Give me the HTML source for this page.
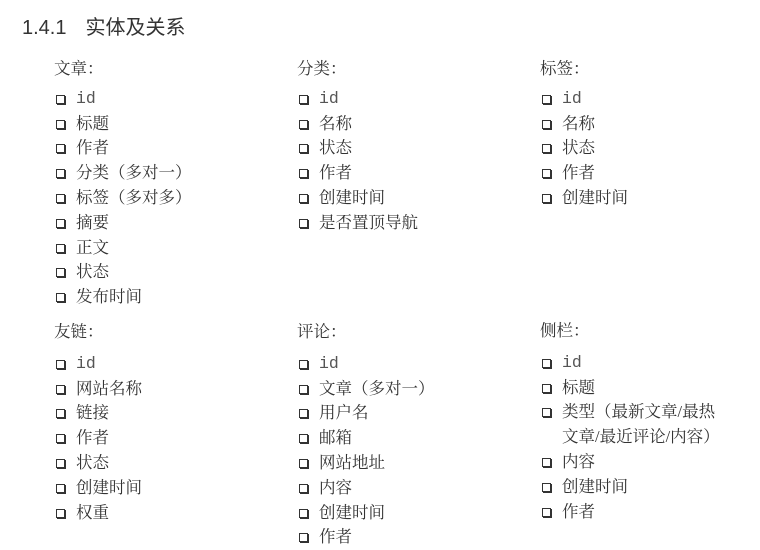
<!DOCTYPE html><html><head><meta charset="utf-8"><style>
body{margin:0;width:760px;height:544px;background:#fff;position:relative;overflow:hidden;color:#333;font-family:"Liberation Serif","Noto Serif CJK SC",serif}
h1{position:absolute;left:22px;top:15px;margin:0;font:400 20px/26px "Liberation Sans","Noto Sans CJK SC",sans-serif;color:#333}
h1 span{margin-left:19px}
.c{position:absolute;font-size:16.5px;line-height:24.8px}
.h{height:24.8px}
.i{position:relative;padding-left:22px;white-space:nowrap}
.i:before{content:"";position:absolute;left:2px;top:8px;width:7px;height:7px;border:1.7px solid #333;box-shadow:1px 1px 0 #333}
.m{font-family:"Liberation Mono",monospace;color:#555}
.n{padding-left:22px}
</style></head><body>
<h1>1.4.1<span>实体及关系</span></h1>
<div class="c" style="left:54px;top:57px"><div class="h" style="margin-bottom:5px">文章：</div>
<div class="i m">id</div><div class="i">标题</div><div class="i">作者</div><div class="i">分类（多对一）</div><div class="i">标签（多对多）</div><div class="i">摘要</div><div class="i">正文</div><div class="i">状态</div><div class="i">发布时间</div></div>
<div class="c" style="left:297px;top:57px"><div class="h" style="margin-bottom:5px">分类：</div>
<div class="i m">id</div><div class="i">名称</div><div class="i">状态</div><div class="i">作者</div><div class="i">创建时间</div><div class="i">是否置顶导航</div></div>
<div class="c" style="left:540px;top:57px"><div class="h" style="margin-bottom:5px">标签：</div>
<div class="i m">id</div><div class="i">名称</div><div class="i">状态</div><div class="i">作者</div><div class="i">创建时间</div></div>
<div class="c" style="left:54px;top:320px"><div class="h" style="margin-bottom:7px">友链：</div>
<div class="i m">id</div><div class="i">网站名称</div><div class="i">链接</div><div class="i">作者</div><div class="i">状态</div><div class="i">创建时间</div><div class="i">权重</div></div>
<div class="c" style="left:297px;top:320px"><div class="h" style="margin-bottom:7px">评论：</div>
<div class="i m">id</div><div class="i">文章（多对一）</div><div class="i">用户名</div><div class="i">邮箱</div><div class="i">网站地址</div><div class="i">内容</div><div class="i">创建时间</div><div class="i">作者</div></div>
<div class="c" style="left:540px;top:319px"><div class="h" style="margin-bottom:7px">侧栏：</div>
<div class="i m">id</div><div class="i">标题</div><div class="i">类型（最新文章/最热</div><div class="n">文章/最近评论/内容）</div><div class="i">内容</div><div class="i">创建时间</div><div class="i">作者</div></div>
</body></html>
